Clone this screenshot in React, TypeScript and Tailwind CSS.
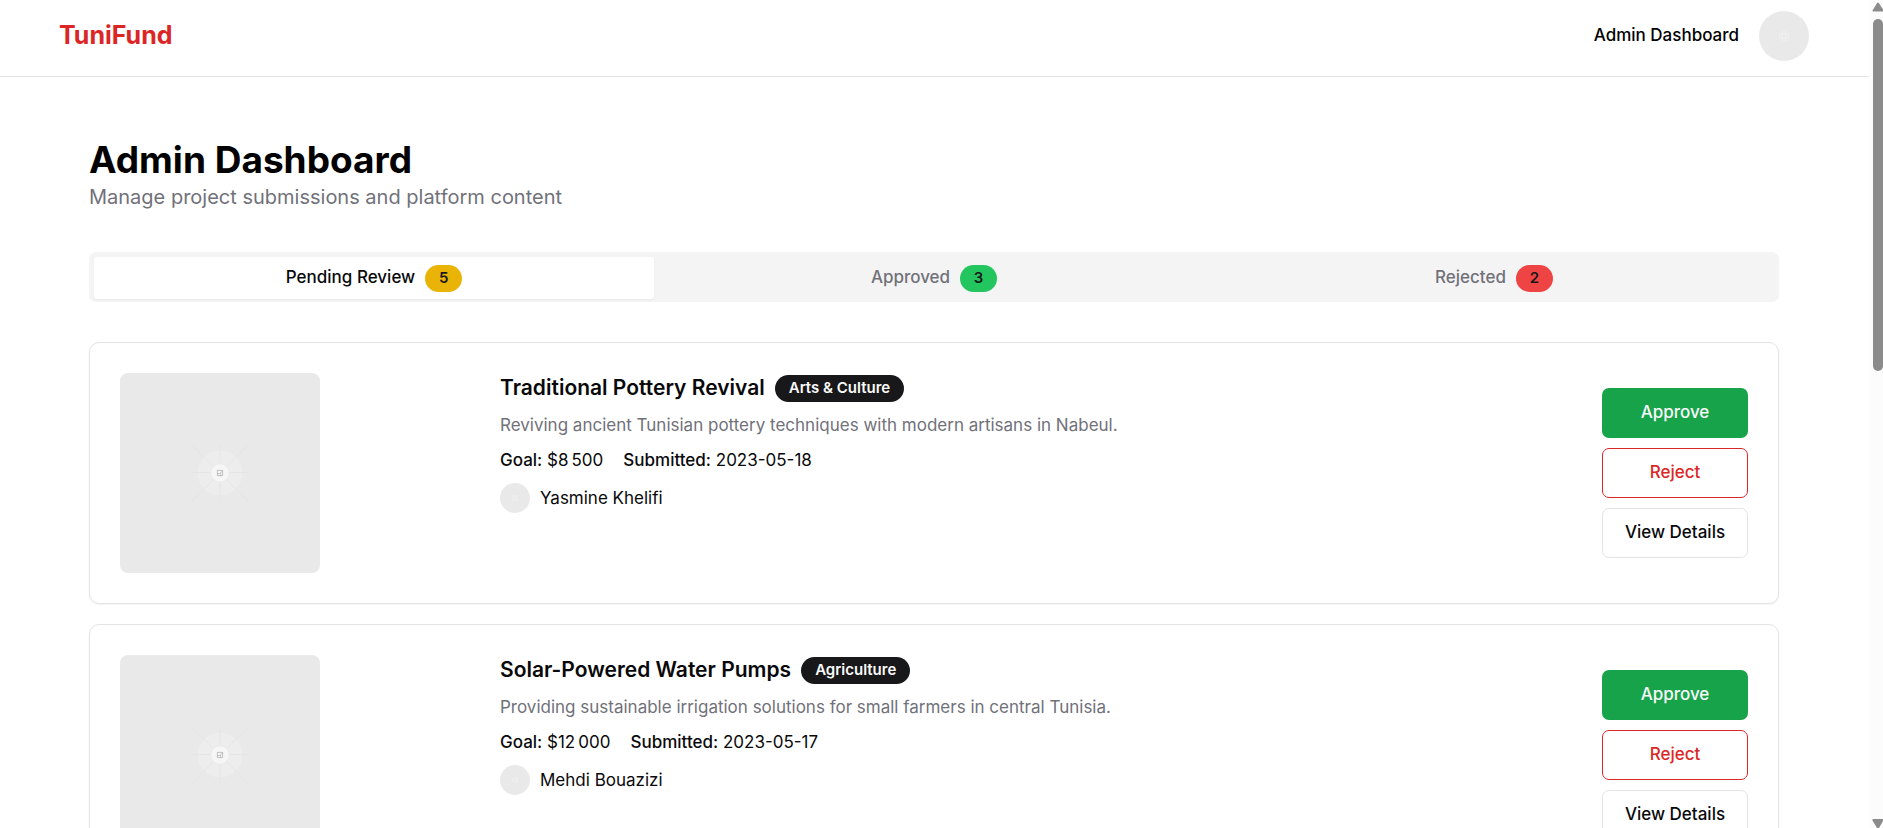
import { useState } from "react";

type Project = {
  title: string;
  category: string;
  description: string;
  goal: string;
  submitted: string;
  author: string;
};

const tabs = [
  { id: "pending", label: "Pending Review", count: 5, badge: "bg-[#eab308]" },
  { id: "approved", label: "Approved", count: 3, badge: "bg-[#22c55e]" },
  { id: "rejected", label: "Rejected", count: 2, badge: "bg-[#ef4444]" },
];

const projects: Project[] = [
  {
    title: "Traditional Pottery Revival",
    category: "Arts & Culture",
    description: "Reviving ancient Tunisian pottery techniques with modern artisans in Nabeul.",
    goal: "$8\u202f500",
    submitted: "2023-05-18",
    author: "Yasmine Khelifi",
  },
  {
    title: "Solar-Powered Water Pumps",
    category: "Agriculture",
    description: "Providing sustainable irrigation solutions for small farmers in central Tunisia.",
    goal: "$12\u202f000",
    submitted: "2023-05-17",
    author: "Mehdi Bouazizi",
  },
];

function Placeholder({ className }: { className: string }) {
  return (
    <svg viewBox="0 0 200 200" className={className} aria-hidden="true">
      <rect width="200" height="200" fill="#e9e9e9" />
      <circle cx="100" cy="100" r="22.5" fill="#ededed" />
      <g stroke="#e5e5e5" strokeWidth="1">
        <path d="M100 71v58M71 99.500h58" />
        <path d="M71 71l58 58M129 71l-58 58" />
      </g>
      <circle cx="100" cy="100" r="9.2" fill="#f6f6f6" stroke="#e6e6e6" strokeWidth="0.6" />
      <g fill="none" stroke="#b0b0b0" strokeWidth="0.8">
        <path d="M97.400 97.400H102.600V102.600H97.400Z" />
        <path d="M97.400 100.600H99.600L102.600 97.800M100.600 99.800V102.600" strokeWidth="0.7" />
      </g>
    </svg>
  );
}

function ProjectCard({ project }: { project: Project }) {
  return (
    <article className="flex gap-[30px] rounded-[10px] border border-[#e4e4e7] bg-white p-[30px] shadow-xs">
      <div className="w-[350px] shrink-0">
        <Placeholder className="size-[200px] rounded-lg" />
      </div>
      <div className="flex min-w-0 flex-1 flex-col gap-2.5">
        <div className="flex h-[30px] items-center gap-2.5">
          <h2 className="text-[21px] font-semibold">{project.title}</h2>
          <span className="flex h-[27px] items-center rounded-full bg-[#18181b] px-3.5 text-[15px] font-semibold text-[#fafafa]">
            {project.category}
          </span>
        </div>
        <p className="text-[17px] leading-[25px] text-[#71717a]">{project.description}</p>
        <div className="flex gap-5 text-[17px] leading-[25px]">
          <p>
            <span className="font-medium">Goal:</span> {project.goal}
          </p>
          <p>
            <span className="font-medium">Submitted:</span> {project.submitted}
          </p>
        </div>
        <div className="flex items-center gap-2.5">
          <Placeholder className="size-[30px] rounded-full" />
          <span className="text-[17px] leading-[25px]">{project.author}</span>
        </div>
      </div>
      <div className="flex w-[146px] shrink-0 flex-col justify-center gap-2.5 text-[17px] font-medium">
        <button type="button" className="h-[50px] rounded-[7px] bg-[#16a34a] text-[#fafafa]">
          Approve
        </button>
        <button type="button" className="h-[50px] rounded-[7px] border border-[#dc2626] text-[#dc2626]">
          Reject
        </button>
        <button type="button" className="h-[50px] rounded-[7px] border border-[#e4e4e7]">
          View Details
        </button>
      </div>
    </article>
  );
}

function ScrollRail() {
  return (
    <div className="flex w-3.5 shrink-0 flex-col items-end overflow-hidden bg-[#fcfcfc]" aria-hidden="true">
      <svg viewBox="0 0 11 19" className="h-[19px] w-[11px] shrink-0">
        <path d="M5 3.200Q6 1.600 7 3.200L11 9.500V11.500H1.200Q0.200 11.500 0.600 10.300Z" fill="#8b8b8b" />
      </svg>
      <div className="min-h-0 w-2.5 flex-1">
        <div className="h-[44%] rounded-full bg-[#8b8b8b]" />
      </div>
      <svg viewBox="0 0 11 9" className="h-[9px] w-[11px] shrink-0">
        <path d="M0.800 0H11V2L7 9H5L0.500 1.500Q0 0.500 0.800 0Z" fill="#8b8b8b" />
      </svg>
    </div>
  );
}

export default function App() {
  const [active, setActive] = useState("pending");

  return (
    <div className="flex h-screen bg-white font-['Inter','Liberation_Sans',sans-serif] text-[#09090b]">
      <div className="min-w-0 flex-1 overflow-y-auto [scrollbar-width:none]">
        <header className="flex items-center justify-between border-b border-[#e4e4e4] pt-[11px] pr-[60px] pb-[15px] pl-[59px]">
          <a href="#" className="text-[25px] font-bold text-[#dc2626]">
            TuniFund
          </a>
          <div className="flex items-center gap-5">
            <a href="#" className="text-[17px] font-medium text-black">
              Admin Dashboard
            </a>
            <Placeholder className="size-[50px] rounded-full" />
          </div>
        </header>

        <main className="pt-[60px] pr-[90px] pl-[89px]">
          <h1 className="text-[37px] leading-[45px] font-bold text-black">Admin Dashboard</h1>
          <p className="text-[20px] leading-[30px] text-[#71717a]">Manage project submissions and platform content</p>

          <div role="tablist" className="mt-10 grid h-[50px] grid-cols-3 rounded-[7px] bg-[#f4f4f4] px-[5px] pt-[5px] pb-[3px]">
            {tabs.map((tab) => (
              <button
                key={tab.id}
                type="button"
                role="tab"
                aria-selected={active === tab.id}
                onClick={() => setActive(tab.id)}
                className={
                  active === tab.id
                    ? "flex items-center justify-center gap-2.5 rounded-[3px] bg-white text-[17px] font-medium text-[#09090b] shadow-xs"
                    : "flex items-center justify-center gap-2.5 rounded-[3px] text-[17px] font-medium text-[#71717a]"
                }
              >
                {tab.label}
                <span
                  className={`flex h-[27px] w-[37px] items-center justify-center rounded-full text-[15px] font-semibold text-[#18181b] ${tab.badge}`}
                >
                  {tab.count}
                </span>
              </button>
            ))}
          </div>

          <section className="mt-10 flex flex-col gap-5 pb-10">
            {projects.map((project) => (
              <ProjectCard key={project.title} project={project} />
            ))}
          </section>
        </main>
      </div>
      <ScrollRail />
    </div>
  );
}
